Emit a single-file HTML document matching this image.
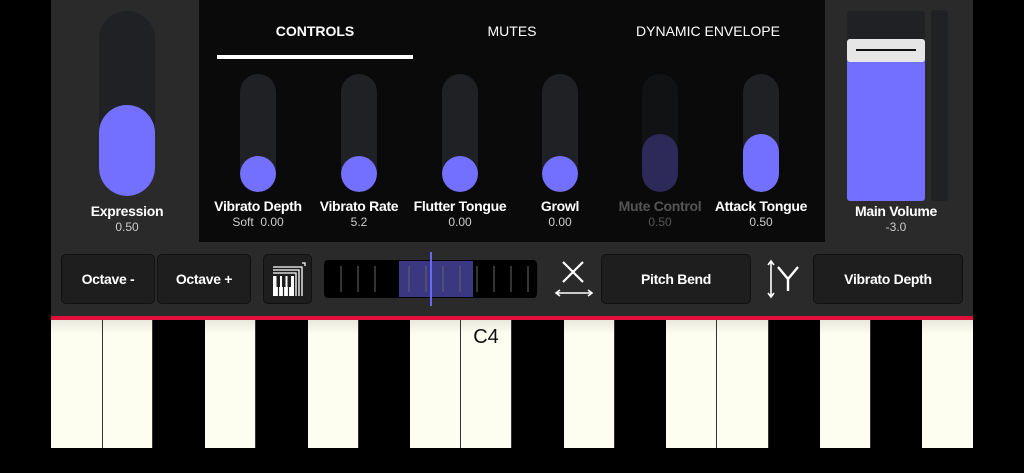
<!DOCTYPE html>
<html><head><style>
*{margin:0;padding:0;box-sizing:border-box}
body{width:1024px;height:473px;background:#000;position:relative;overflow:hidden;font-family:"Liberation Sans",sans-serif;color:#fff}
.a{position:absolute}
.trk{position:absolute;background:#1f2125;border-radius:18px;overflow:hidden}
.fill{position:absolute;left:0;right:0;bottom:0;background:#7470ff;border-radius:18px}
.lbl{position:absolute;width:120px;text-align:center;font-weight:bold;font-size:14px;letter-spacing:-0.3px}
.val{position:absolute;width:120px;text-align:center;font-size:12px;color:#ccc}
.btn{position:absolute;background:#1e1e1e;border:1px solid #111;border-radius:5px;font-weight:bold;font-size:14px;letter-spacing:-0.3px;display:flex;align-items:center;justify-content:center;top:254px;height:50px}
.tab{position:absolute;top:23px;font-size:14px;text-align:center;width:200px}
.k{position:absolute;top:320px;height:128px;background:linear-gradient(#e8e8dc,#fdfdf0 14px);border-right:1px solid #333}
</style></head><body>
<div class="a" style="left:51px;top:0;width:148px;height:242px;background:#2a2a2a"></div>
<div class="a" style="left:199px;top:0;width:626px;height:242px;background:#0a0a0a"></div>
<div class="a" style="left:825px;top:0;width:148px;height:242px;background:#2a2a2a"></div>
<div class="trk" style="left:99px;top:11px;width:56px;height:185px;border-radius:28px"><div class="fill" style="height:91px;border-radius:28px"></div></div>
<div class="lbl" style="left:67px;top:203px">Expression</div>
<div class="val" style="left:67px;top:220px">0.50</div>
<div class="tab" style="left:215px;font-weight:bold">CONTROLS</div>
<div class="tab" style="left:412px">MUTES</div>
<div class="tab" style="left:608px">DYNAMIC ENVELOPE</div>
<div class="a" style="left:217px;top:55px;width:196px;height:4px;background:#fff"></div>

<div class="trk" style="left:240px;top:74px;width:36px;height:118px"><div class="fill" style="height:36px"></div></div>
<div class="trk" style="left:341px;top:74px;width:36px;height:118px"><div class="fill" style="height:36px"></div></div>
<div class="trk" style="left:442px;top:74px;width:36px;height:118px"><div class="fill" style="height:36px"></div></div>
<div class="trk" style="left:542px;top:74px;width:36px;height:118px"><div class="fill" style="height:36px"></div></div>
<div class="trk" style="left:642px;top:74px;width:36px;height:118px;background:#111214"><div class="fill" style="height:58px;background:#2d2a5a"></div></div>
<div class="trk" style="left:743px;top:74px;width:36px;height:118px"><div class="fill" style="height:58px"></div></div>
<div class="lbl" style="left:198px;top:198px">Vibrato Depth</div><div class="val" style="left:198px;top:215px">Soft&nbsp; 0.00</div>
<div class="lbl" style="left:299px;top:198px">Vibrato Rate</div><div class="val" style="left:299px;top:215px">5.2</div>
<div class="lbl" style="left:400px;top:198px">Flutter Tongue</div><div class="val" style="left:400px;top:215px">0.00</div>
<div class="lbl" style="left:500px;top:198px">Growl</div><div class="val" style="left:500px;top:215px">0.00</div>
<div class="lbl" style="left:600px;top:198px;color:#555">Mute Control</div><div class="val" style="left:600px;top:215px;color:#555">0.50</div>
<div class="lbl" style="left:701px;top:198px">Attack Tongue</div><div class="val" style="left:701px;top:215px">0.50</div>

<div class="a" style="left:847px;top:11px;width:78px;height:190px;background:#1f2125;border-radius:3px"></div>
<div class="a" style="left:847px;top:60px;width:78px;height:141px;background:#7470ff;border-radius:0 0 3px 3px"></div>
<div class="a" style="left:847px;top:39px;width:78px;height:23px;background:#e6e6e6;border-radius:3px"></div>
<div class="a" style="left:856px;top:49px;width:60px;height:2px;background:#111"></div>
<div class="a" style="left:931px;top:10px;width:17px;height:191px;background:#1f2125;border-radius:3px"></div>
<div class="lbl" style="left:836px;top:203px">Main Volume</div>
<div class="val" style="left:836px;top:220px">-3.0</div>

<div class="a" style="left:51px;top:242px;width:922px;height:74px;background:#2a2a2a"></div>
<div class="a" style="left:51px;top:316px;width:922px;height:4px;background:#e0103a"></div>
<div class="btn" style="left:61px;width:94px">Octave -</div>
<div class="btn" style="left:157px;width:94px">Octave +</div>
<div class="btn" style="left:263px;width:49px">
<svg width="40" height="40" viewBox="0 0 40 40"><g fill="none" stroke="#fff" stroke-width="1.3"><path d="M5 8H34V37M5 11H31V37M5 14H28V37"/><path d="M34 4H37V7"/></g><rect x="5" y="17" width="21" height="20" fill="#fff"/><g stroke="#1e1e1e" stroke-width="1.2"><path d="M10.5 28V37M15.5 28V37M20.5 28V37"/></g><g fill="#1e1e1e"><rect x="8.5" y="17" width="3.5" height="11"/><rect x="14" y="17" width="3.5" height="11"/><rect x="19.5" y="17" width="3.5" height="11"/></g></svg></div>
<div class="a" style="left:324px;top:260px;width:213px;height:38px;background:#000;border-radius:4px"></div>
<div class="a" style="left:399px;top:261px;width:74px;height:36px;background:#3a3880"></div>
<svg class="a" style="left:324px;top:260px" width="213" height="38"><g stroke="#666" stroke-width="1"><path d="M17 6V32M34 6V32M51 6V32M85 6V32M102 6V32M119 6V32M136 6V32M153 6V32M170 6V32M187 6V32M204 6V32"/></g></svg>
<div class="a" style="left:430px;top:252px;width:2px;height:54px;background:#6a66ff"></div>
<svg class="a" style="left:553px;top:258px" width="42" height="42"><g stroke="#fff" stroke-width="2.2" fill="none"><path d="M10 4L30 24M30 4L10 24"/><path d="M4 35H38" stroke-width="1.6"/><path d="M7 32L3 35L7 38M35 32L39 35L35 38" stroke-width="1.6"/></g></svg>
<div class="btn" style="left:601px;width:150px">Pitch Bend</div>
<svg class="a" style="left:763px;top:258px" width="42" height="42"><g stroke="#fff" fill="none"><path d="M8 3V39M5 7L8 3L11 7M5 35L8 39L11 35" stroke-width="1.6"/><path d="M15 9L25 21L35 9M25 21V33" stroke-width="2.4"/></g></svg>
<div class="btn" style="left:813px;width:150px">Vibrato Depth</div>

<div class="k" style="left:51px;width:52px"></div>
<div class="k" style="left:103px;width:50px"></div>
<div class="k" style="left:205px;width:51px"></div>
<div class="k" style="left:308px;width:51px"></div>
<div class="k" style="left:410px;width:51px"></div>
<div class="k" style="left:461px;width:51px;text-align:center;font-size:20px;color:#111;padding-top:6px">C4</div>
<div class="k" style="left:564px;width:51px"></div>
<div class="k" style="left:666px;width:51px"></div>
<div class="k" style="left:717px;width:52px"></div>
<div class="k" style="left:820px;width:51px"></div>
<div class="k" style="left:922px;width:51px;border-right:none"></div>
</body></html>
